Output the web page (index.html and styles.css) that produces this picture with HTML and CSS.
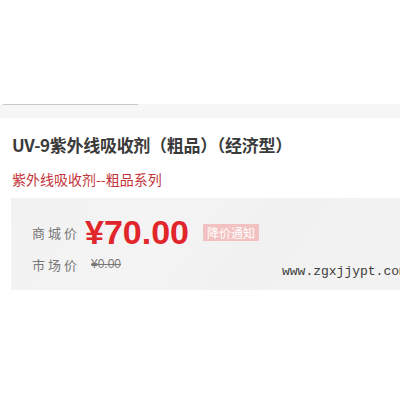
FILE: index.html
```html
<!DOCTYPE html>
<html lang="zh-CN">
<head>
    <meta charset="UTF-8">
    <meta name="viewport" content="width=device-width, initial-scale=1.0">
    <title>UV-9紫外线吸收剂</title>
    <link rel="stylesheet" href="styles.css">
</head>
<body>
    <div class="gallery-space"></div>
    <div class="thumb-bar">
        <div class="thumb-line"></div>
    </div>

    <div class="product-info">
        <h1 class="product-title">UV-9紫外线吸收剂（粗品）（经济型）</h1>
        <p class="product-sub">紫外线吸收剂--粗品系列</p>

        <div class="price-box">
            <div class="price-row">
                <span class="label">商城价</span>
                <span class="price">¥70.00</span>
                <span class="notify">降价通知</span>
            </div>
            <div class="price-row market">
                <span class="label">市场价</span>
                <span class="old-price">¥0.00</span>
            </div>
            <div class="watermark">www.zgxjjypt.com</div>
        </div>
    </div>
</body>
</html>
```

FILE: styles.css
```css
body {
    margin: 0;
    background: #fff;
    font-family: "Noto Sans CJK SC", "Liberation Sans", sans-serif;
    color: #333;
    overflow: hidden;
}
.gallery-space { height: 104px; }
.thumb-bar {
    height: 14px;
    background: #f6f6f6;
}
.thumb-line {
    width: 135px;
    height: 1px;
    margin-left: 3px;
    background: #c8c8c8;
}
.product-info { padding-left: 11px; }
.product-title {
    margin: 15px 0 0 1px;
    font-size: 17px;
    line-height: 24px;
    font-weight: bold;
    color: #3a3a3a;
    white-space: nowrap;
    letter-spacing: -0.3px;
}
.product-sub {
    margin: 12px 0 0 1px;
    font-size: 14px;
    line-height: 20px;
    color: #c4343a;
}
.price-box {
    position: relative;
    margin-top: 9px;
    height: 92px;
    padding: 14px 0 0 21px;
    box-sizing: border-box;
    background: linear-gradient(125deg, #f2f2f2 0%, #f4f4f4 40%, #f1f1f1 60%, #f3f3f3 100%);
}
.price-row {
    display: flex;
    align-items: center;
    height: 40px;
}
.price-row.market { height: 24px; }
.label {
    width: 53px;
    font-size: 13px;
    letter-spacing: 3px;
    color: #777;
}
.price {
    font-family: "Liberation Sans", "Noto Sans", sans-serif;
    font-size: 34px;
    font-weight: bold;
    color: #e0262b;
}
.notify {
    margin-left: 14px;
    padding: 0 4px;
    height: 17px;
    line-height: 17px;
    font-size: 12px;
    color: #fff;
    background: #f2c1c1;
    border-radius: 1px;
}
.old-price {
    margin-left: 6px;
    font-family: "Liberation Sans", sans-serif;
    font-size: 12px;
    color: #777;
    text-decoration: line-through;
}
.watermark {
    position: absolute;
    left: 271px;
    top: 66px;
    font-family: "Liberation Mono", monospace;
    font-size: 13px;
    color: #3c3c3c;
    white-space: nowrap;
}
```
